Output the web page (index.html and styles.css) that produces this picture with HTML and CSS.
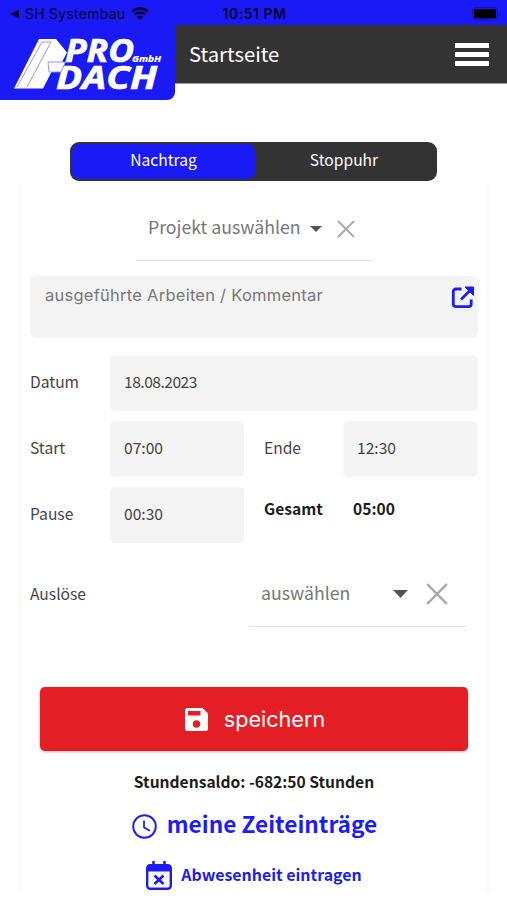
FILE: index.html
```
<!DOCTYPE html>
<html lang="de">
<head>
    <meta charset="UTF-8">
    <title>Startseite</title>
    <link rel="stylesheet" href="styles.css">
</head>
<body>
<div class="status">
    <div class="back">
        <svg width="9" height="8" viewBox="0 0 9 8"><path d="M9 0v8L0 4z"/></svg>
        <span class="backname">SH Systembau</span>
        <svg class="wifi" width="18" height="13" viewBox="0 0 18 13">
            <path d="M1 4.7a11.5 11.5 0 0 1 16 0M3.9 7.6a7.4 7.4 0 0 1 10.2 0" fill="none" stroke="#04042c" stroke-width="2.5"/>
            <path d="M9 13L5.9 9.7a4.4 4.4 0 0 1 6.2 0z"/>
        </svg>
    </div>
    <span class="time">10:51 PM</span>
    <svg class="battery" width="30" height="14" viewBox="0 0 30 14">
        <rect x=".5" y=".5" width="25" height="12.500" rx="3.500" fill="none" stroke="#1414a8"/>
        <rect x="2" y="2" width="22" height="9.500" rx="2" fill="#000"/>
        <path d="M27.500 5v4q2-2 0-4z" fill="#1414a8"/>
    </svg>
</div>

<div class="header">
    <div class="logo">
        <svg width="174" height="75" viewBox="0 25 174 75">
            <g fill="#fff">
                <path d="M39 39H56L67 52.500L62 62H65.500L61 72H51.500L43 88.500H14z"/>
                <g class="logotext">
                    <text x="65" y="62" font-size="32" textLength="69" lengthAdjust="spacingAndGlyphs">PRO</text>
                    <text x="56" y="88.500" font-size="32.500" textLength="101" lengthAdjust="spacingAndGlyphs">DACH</text>
                    <text class="gmbh" x="132" y="61.500" font-size="9" textLength="29" lengthAdjust="spacingAndGlyphs">GmbH</text>
                </g>
            </g>
            <path d="M42 42L17 87M51 42L27 87M42 42h9M48 62h17.500l-4.500 10H49z" fill="none" stroke="#8a8af5" stroke-width=".9"/>
        </svg>
    </div>
    <span class="title">Startseite</span>
    <div class="burger"><i></i><i></i><i></i></div>
</div>

<div class="switch">
    <div class="tab on">Nachtrag</div>
    <div class="tab">Stoppuhr</div>
</div>

<div class="card">
    <div class="select projekt">
        <span>Projekt auswählen</span>
        <svg class="arrow" width="12" height="6" viewBox="0 0 12 6"><path d="M0 0h12L6 6z"/></svg>
        <svg class="cross" width="18" height="18" viewBox="0 0 18 18"><path d="M1 1l16 16M17 1L1 17"/></svg>
    </div>

    <div class="comment">
        <span>ausgeführte Arbeiten / Kommentar</span>
        <svg width="24" height="24" viewBox="0 0 24 24">
            <path d="M10.500 4H5a2.700 2.700 0 0 0-2.700 2.700V19a2.700 2.700 0 0 0 2.700 2.700h12.500a2.700 2.700 0 0 0 2.700-2.700v-4.500M10 14.500L18.500 6" fill="none" stroke="#1c1cf5" stroke-width="2.800"/>
            <path d="M14 2H22.500V10.500z" fill="#1c1cf5" stroke="#1c1cf5"/>
        </svg>
    </div>

    <div class="row">
        <label>Datum</label>
        <div class="field wide">18.08.2023</div>
    </div>
    <div class="row">
        <label>Start</label>
        <div class="field">07:00</div>
        <label class="second">Ende</label>
        <div class="field">12:30</div>
    </div>
    <div class="row">
        <label>Pause</label>
        <div class="field">00:30</div>
        <b class="sum-label">Gesamt</b>
        <b class="sum">05:00</b>
    </div>

    <div class="row ausloese">
        <label>Auslöse</label>
        <div class="select">
            <span>auswählen</span>
            <svg class="arrow" width="15" height="8" viewBox="0 0 12 6" preserveAspectRatio="none"><path d="M0 0h12L6 6z"/></svg>
            <svg class="cross" width="22" height="22" viewBox="0 0 18 18"><path d="M1 1l16 16M17 1L1 17"/></svg>
        </div>
    </div>

    <div class="save">
        <svg width="23" height="23" viewBox="0 0 23 23">
            <path d="M2.500 0H17.500L23 5.500V20.500A2.500 2.500 0 0 1 20.500 23H2.500A2.500 2.500 0 0 1 0 20.500V2.500A2.500 2.500 0 0 1 2.500 0z" fill="#fff"/>
            <path d="M3 3h12.500v4.500H3z" fill="#e31e24"/>
            <circle cx="11.500" cy="16" r="3.700" fill="#e31e24"/>
        </svg>
        <span>speichern</span>
    </div>

    <div class="saldo">Stundensaldo: -682:50 Stunden</div>
    <div class="link entries">
        <svg width="25" height="25" viewBox="0 0 25 25" fill="none" stroke="#1c1cf5">
            <circle cx="12.500" cy="12.500" r="11.300" stroke-width="1.900"/>
            <path d="M12 6.500v7l6 3.200" stroke-width="1.700"/>
        </svg>
        <span>meine Zeiteinträge</span>
    </div>
    <div class="link absence">
        <svg width="26" height="29" viewBox="0 0 26 29">
            <path d="M7.500 0v5M18.500 0v5" stroke="#1c1cf5" stroke-width="2.600"/>
            <rect x="1.200" y="4.200" width="23.600" height="23.600" rx="3" fill="none" stroke="#1c1cf5" stroke-width="2.400"/>
            <path d="M1 4h24v6.500H1z" fill="#1c1cf5"/>
            <path d="M8.500 14.500l9 8.500M17.500 14.500l-9 8.500" stroke="#1c1cf5" stroke-width="2.600"/>
        </svg>
        <span>Abwesenheit eintragen</span>
    </div>
</div>
</body>
</html>
```
FILE: styles.css
```
*{
    margin: 0;
    padding: 0;
    box-sizing: border-box;
}
body{
    height: 900px;
    overflow: hidden;
    background: #fff;
    color: #444;
    font-family: "Noto Sans CJK SC", "Noto Sans", sans-serif;
    font-size: 15.6px;
    line-height: 20px;
    white-space: nowrap;
}
svg{
    display: block;
    flex: none;
}

/* status bar */
.status{
    display: grid;
    grid-template-columns: 1fr auto 1fr;
    align-items: center;
    height: 25px;
    padding: 2px 8px 0 10px;
    background: #1a1af7;
    color: #04042c;
    font-family: Inter, sans-serif;
    font-size: 14px;
}
.status svg{
    fill: #04042c;
}
.back{
    display: flex;
    align-items: center;
}
.backname{
    margin-left: 6px;
    letter-spacing: 0.25px;
}
.wifi{
    margin-left: 6px;
}
.time{
    font-weight: 600;
    letter-spacing: 0.5px;
}
.battery{
    justify-self: end;
    margin-right: -3px;
}

/* header */
.header{
    display: flex;
    align-items: center;
    height: 59px;
    padding-right: 18px;
    background: #333;
    border-bottom: 1px solid #999;
    color: #fff;
}
.logo{
    align-self: flex-start;
    width: 175px;
    height: 75px;
    background: #1a1af7;
    border-radius: 0 0 8px 0;
}
.logotext{
    font-family: "Open Sans", sans-serif;
    font-weight: 700;
    font-style: italic;
    stroke: #fff;
    stroke-width: 0.7px;
}
.gmbh{
    stroke-width: 0.2px;
}
.title{
    margin: -2px auto 0 14px;
    font-size: 20.3px;
}
.burger{
    display: flex;
    flex-direction: column;
    gap: 4px;
    width: 34px;
    margin-bottom: 0;
}
.burger i{
    height: 5px;
    background: #fff;
}

/* Nachtrag / Stoppuhr */
.switch{
    display: flex;
    width: 367px;
    height: 39px;
    margin: 58px 0 4px 70px;
    padding: 2px;
    background: #333;
    border-radius: 9px;
    color: #fff;
}
.tab{
    flex: 1;
    padding: 5px 2px 0 0;
    border-radius: 7px;
    text-align: center;
}
.tab.on{
    flex: none;
    width: 183px;
    padding-right: 0;
    background: #1a1af7;
}

.card{
    width: 470px;
    height: 707px;
    margin-left: 19px;
    padding: 0 9px;
    border-left: 2px solid #f7f7fb;
    border-right: 2px solid #f5f5f7;
}
.select{
    display: flex;
    align-items: center;
    border-bottom: 1px solid #e4e4e4;
    color: #777;
    font-size: 17.7px;
}
.select span{
    margin-top: -5px;
}
.arrow{
    fill: #555;
}
.cross path{
    stroke: #aaa;
    stroke-width: 2;
}
.projekt{
    width: 236px;
    height: 76px;
    margin-left: 106px;
    padding: 12px 0 0 12px;
}
.projekt .arrow{
    margin-left: auto;
}
.projekt .cross{
    margin: 0 17px 0 15px;
}
.comment{
    display: flex;
    justify-content: space-between;
    height: 62px;
    margin-top: 15px;
    padding: 9px 3px 0 15px;
    background: #f4f4f4;
    border-radius: 6px;
    color: #777;
    font-family: Inter, sans-serif;
    font-size: 16.5px;
    letter-spacing: 0.25px;
}

/* form rows */
.row{
    display: flex;
    align-items: center;
    height: 56px;
    margin-top: 10px;
}
.comment + .row{
    margin-top: 17px;
}
.row label{
    width: 80px;
    margin-top: -4px;
}
.row .second{
    margin-left: 20px;
}
.row .second + .field{
    margin-left: -1px;
}
.field{
    width: 134px;
    height: 56px;
    padding-left: 14px;
    background: #f4f4f4;
    border-radius: 5px;
    line-height: 52px;
}
.field.wide{
    width: 368px;
    letter-spacing: -0.5px;
}
.sum-label{
    width: 89px;
    margin: -14px 0 0 20px;
    color: #1c1c1c;
}
.sum{
    margin-top: -14px;
    color: #1c1c1c;
}
.ausloese{
    height: 65px;
    margin-top: 19px;
}
.ausloese .select{
    width: 218px;
    height: 65px;
    margin-left: 139px;
    padding-left: 12px;
}
.ausloese .arrow{
    margin-left: auto;
}
.ausloese .cross{
    margin: 0 19px 0 18px;
}

.save{
    display: flex;
    align-items: center;
    justify-content: center;
    gap: 16px;
    height: 64px;
    margin: 60px 10px 0;
    padding-left: 2px;
    background: #e31e24;
    border-radius: 5px;
    box-shadow: 0 1px 3px rgba(0, 0, 0, 0.3);
    color: #fff;
    font-family: Inter, sans-serif;
    font-size: 21.6px;
}
.saldo{
    margin-top: 20px;
    color: #1c1c1c;
    font-weight: bold;
    text-align: center;
}
.link{
    display: flex;
    align-items: center;
    justify-content: center;
    color: #1c1cf5;
    font-weight: bold;
}
.entries{
    gap: 10px;
    margin-top: 23px;
    padding-left: 1px;
    font-size: 22.7px;
}
.entries span{
    margin-top: -5px;
}
.absence{
    gap: 9px;
    margin-top: 22px;
    font-size: 15.9px;
}
.absence span{
    margin-top: -2px;
}
```
